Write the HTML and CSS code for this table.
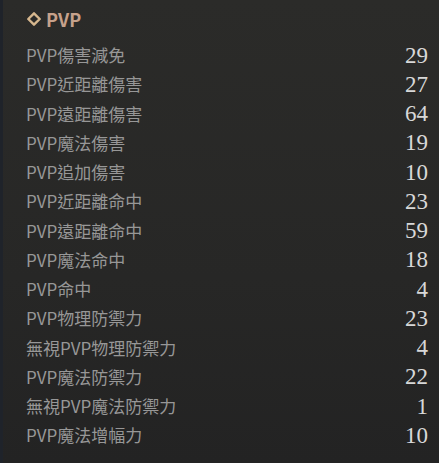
FILE: index.html
```html
<!DOCTYPE html>
<html lang="zh-Hant">
<head>
    <meta charset="UTF-8">
    <meta name="viewport" content="width=device-width, initial-scale=1.0">
    <title>PVP</title>
    <link rel="stylesheet" href="styles.css">
</head>
<body>
    <div class="panel">
        <div class="title">
            <svg class="mark" width="14" height="14" viewBox="0 0 14 14">
                <path d="M7 1.3 L12.7 7 L7 12.7 L1.3 7 Z" fill="none" stroke="#d6b78e" stroke-width="2.4" stroke-linejoin="round"/>
            </svg>
            <span>PVP</span>
        </div>
        <ul class="stats">
            <li><span class="name">PVP傷害減免</span><span class="val">29</span></li>
            <li><span class="name">PVP近距離傷害</span><span class="val">27</span></li>
            <li><span class="name">PVP遠距離傷害</span><span class="val">64</span></li>
            <li><span class="name">PVP魔法傷害</span><span class="val">19</span></li>
            <li><span class="name">PVP追加傷害</span><span class="val">10</span></li>
            <li><span class="name">PVP近距離命中</span><span class="val">23</span></li>
            <li><span class="name">PVP遠距離命中</span><span class="val">59</span></li>
            <li><span class="name">PVP魔法命中</span><span class="val">18</span></li>
            <li><span class="name">PVP命中</span><span class="val">4</span></li>
            <li><span class="name">PVP物理防禦力</span><span class="val">23</span></li>
            <li><span class="name">無視PVP物理防禦力</span><span class="val">4</span></li>
            <li><span class="name">PVP魔法防禦力</span><span class="val">22</span></li>
            <li><span class="name">無視PVP魔法防禦力</span><span class="val">1</span></li>
            <li><span class="name">PVP魔法增幅力</span><span class="val">10</span></li>
        </ul>
    </div>
</body>
</html>
```
FILE: styles.css
```css
html, body {
    margin: 0;
    height: 100%;
}
body {
    background: linear-gradient(180deg, #2b2b29 0%, #272726 60%, #232323 100%);
    font-family: "Noto Sans CJK TC", "Noto Sans", sans-serif;
    overflow: hidden;
}
.panel {
    height: 100%;
    border-left: 3px solid #1f232a;
    box-sizing: border-box;
    padding: 0 11px 0 23px;
}
.title {
    display: flex;
    align-items: center;
    gap: 5px;
    height: 38px;
    color: #c6a18b;
    font-size: 18px;
    font-weight: 600;
    padding-left: 1px;
}
.mark {
    display: block;
}
.stats {
    list-style: none;
    margin: 2px 0 0;
    padding: 0;
}
.stats li {
    display: flex;
    justify-content: space-between;
    align-items: center;
    height: 29.25px;
}
.name {
    color: #979797;
    font-size: 17px;
}
.val {
    color: #d8d8d8;
    font-family: "Liberation Serif", serif;
    font-size: 23px;
    padding-top: 2px;
}
```
